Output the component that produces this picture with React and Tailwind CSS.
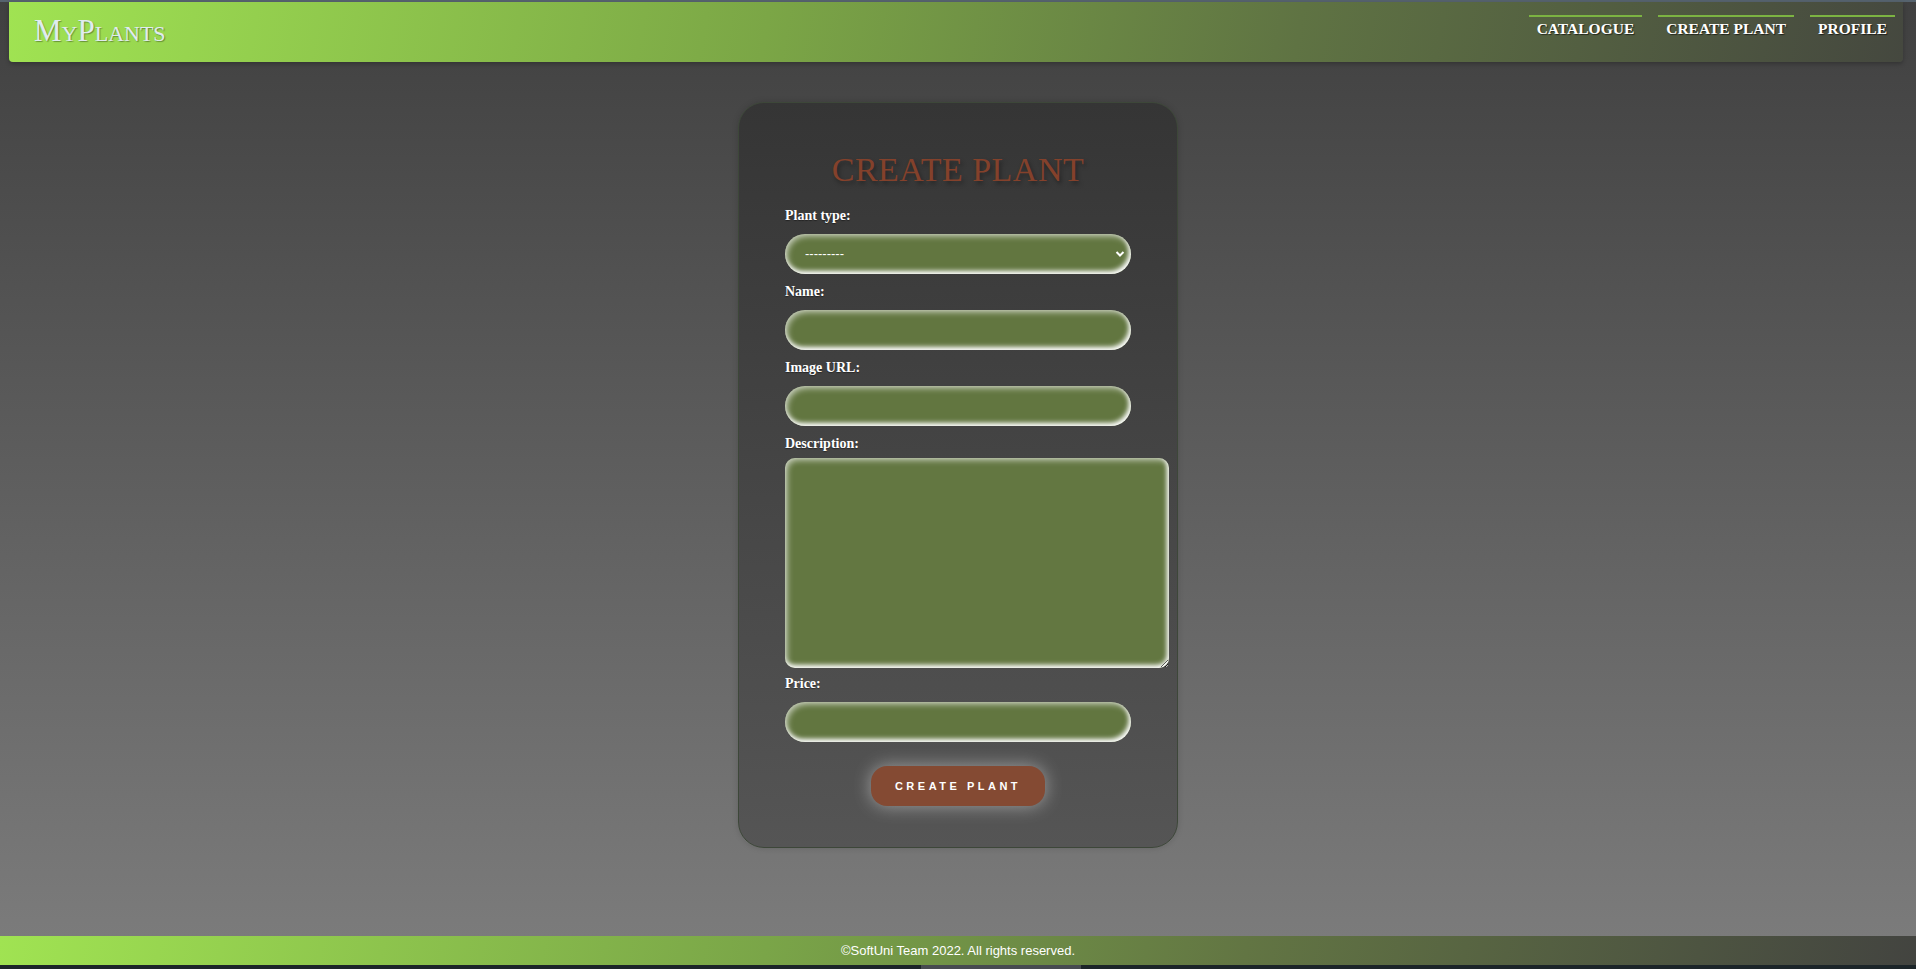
import React from 'react'

const fieldClass =
    "w-[346px] h-[40px] rounded-full bg-[#627640] text-white outline-none px-5 text-[13px] [font-family:'Liberation_Sans',sans-serif] shadow-[inset_-2px_-3px_5px_#fff,inset_2px_2px_6px_rgba(255,255,255,0.65)]"

const Label = ({ children, className = "my-2" }) => (
    <label className={className + " block h-5 leading-5 text-[14px] font-bold text-white [font-family:'Liberation_Serif',serif] [text-shadow:0_1px_1px_rgba(0,0,0,0.4)]"}>
        {children}
    </label>
)

const NavLink = ({ children }) => (
    <a className="border-t-2 border-[#7cb342] px-2 pt-[2px] leading-[20px] text-[15.5px] font-bold text-white [font-family:'Liberation_Serif',serif] [text-shadow:1px_1px_1px_rgba(0,0,0,0.6)]">
        {children}
    </a>
)

export default function App() {
    return (
        <div className="min-h-screen flex flex-col bg-[linear-gradient(180deg,#404040_0%,#7d7d7d_100%)]">
            <div className="h-[2px] bg-[#56636e]"></div>

            <header className="ml-[9px] mr-[13px] h-[60px] rounded-b-[4px] flex items-center justify-between bg-[linear-gradient(100deg,#a0e352_0%,#7ba646_40%,#5f7343_68%,#45483f_100%)] shadow-[0_2px_4px_rgba(0,0,0,0.25)]">
                <span className="ml-[25px] mt-[-2px] text-[31px] text-[#e0ebf0] [font-family:'Liberation_Serif',serif] [font-variant-caps:small-caps] [text-shadow:1px_1px_1px_rgba(0,0,0,0.35)]">
                    MyPlants
                </span>
                <nav className="flex gap-4 mr-2 mt-[-10px]">
                    <NavLink>CATALOGUE</NavLink>
                    <NavLink>CREATE PLANT</NavLink>
                    <NavLink>PROFILE</NavLink>
                </nav>
            </header>

            <main className="flex-1 flex justify-center pt-[40px]">
                <form className="w-[440px] h-[746px] rounded-[26px] border border-[#3d4739] bg-[linear-gradient(180deg,#353535_0%,#555555_100%)] pt-[47px] pl-[46px] shadow-[0_0_6px_rgba(0,0,0,0.15)]">
                    <h1 className="h-[40px] mb-[16px] mr-[46px] text-center text-[34px] leading-[40px] tracking-[0.5px] text-[#84412b] [font-family:'Liberation_Serif',serif] [text-shadow:2px_3px_4px_rgba(0,0,0,0.35)]">
                        CREATE PLANT
                    </h1>

                    <Label>Plant type:</Label>
                    <div className="relative w-[346px]">
                        <select className={fieldClass + " appearance-none"}>
                            <option>---------</option>
                        </select>
                        <svg className="absolute right-[6px] top-[16px]" width="10" height="8" viewBox="0 0 10 8">
                            <path d="M1.5 2 L5 5.5 L8.5 2" stroke="#fff" strokeWidth="2" fill="none" />
                        </svg>
                    </div>

                    <Label>Name:</Label>
                    <input className={fieldClass} />

                    <Label>Image URL:</Label>
                    <input className={fieldClass} />

                    <Label className="mt-2 mb-1">Description:</Label>
                    <textarea className="block w-[384px] h-[210px] rounded-[10px] bg-[#637741] text-white outline-none p-3 shadow-[inset_-2px_-3px_5px_#fff,inset_2px_2px_6px_rgba(255,255,255,0.65)]"></textarea>

                    <Label className="mt-[6px] mb-2">Price:</Label>
                    <input className={fieldClass} />

                    <div className="w-[346px] flex justify-center mt-[24px]">
                        <button
                            type="button"
                            className="w-[174px] h-[40px] rounded-[16px] bg-[#844a33] text-white text-[11px] font-bold tracking-[3.5px] [font-family:'Liberation_Sans',sans-serif] shadow-[0_0_18px_rgba(255,255,255,0.45)]"
                        >
                            CREATE PLANT
                        </button>
                    </div>
                </form>
            </main>

            <footer className="h-[29px] flex items-center justify-center bg-[linear-gradient(100deg,#a0e352_0%,#7aa548_40%,#627543_65%,#434440_100%)]">
                <p className="text-[13px] text-white [font-family:'Liberation_Sans',sans-serif]">
                    ©SoftUni Team 2022. All rights reserved.
                </p>
            </footer>
            <div className="h-[4px] flex bg-[#1c2529]">
                <div className="ml-[921px] w-[160px] bg-[#474b50]"></div>
            </div>
        </div>
    )
}
